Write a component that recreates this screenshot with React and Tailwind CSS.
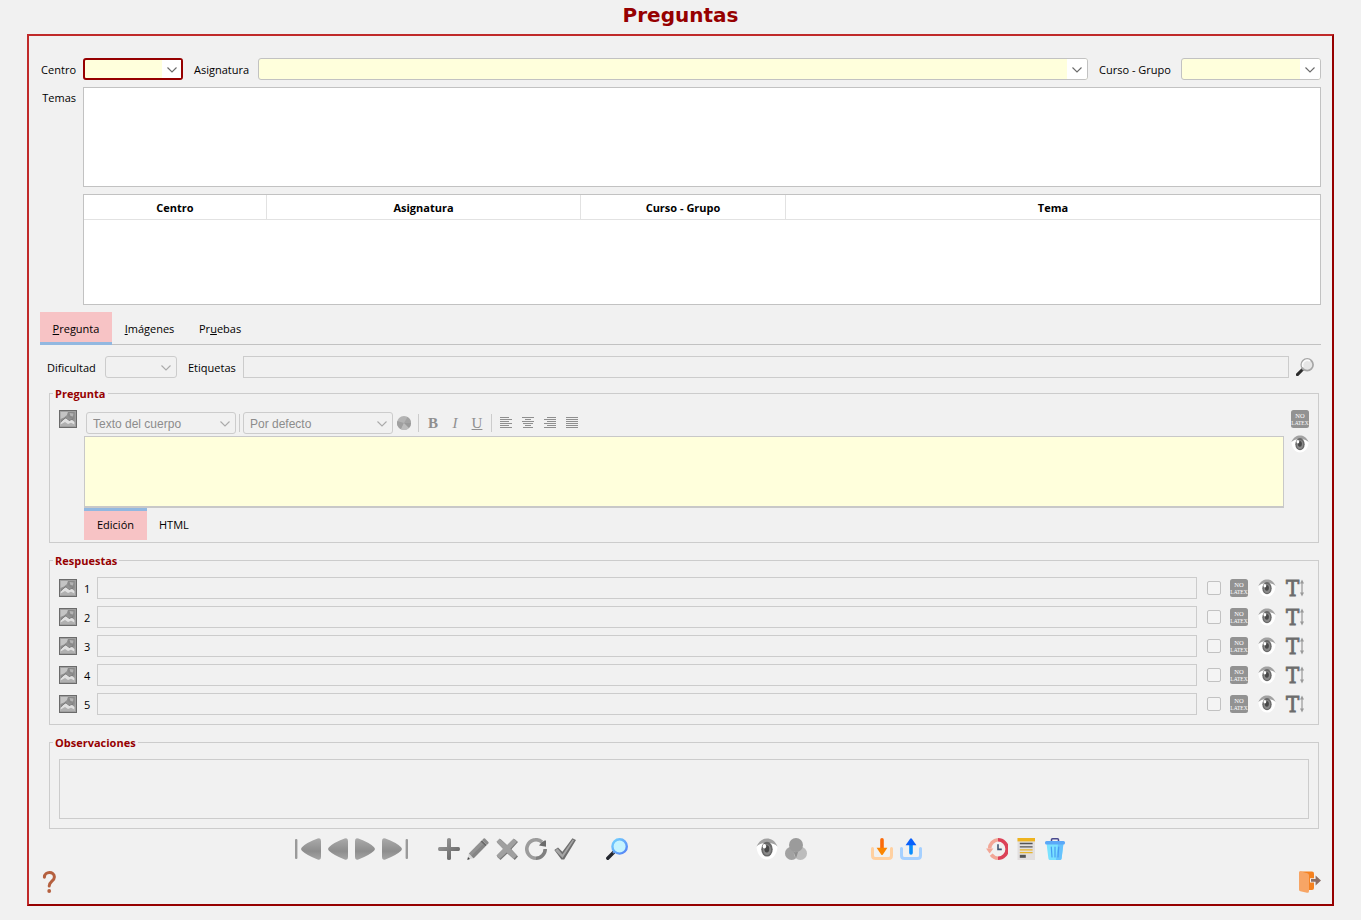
import React from "react";

function Chevron({ className }) {
  return (
    <svg className={className} width="10" height="6" viewBox="0 0 10 6" fill="none" stroke="currentColor" strokeWidth="1.1" aria-hidden="true">
      <path d="M0.5 0.5 L5 5 L9.5 0.5" />
    </svg>
  );
}

function Combo({ id, label, wrapClass, selectClass, arrowClass, chevronClass, disabled, options = [""] }) {
  return (
    <div className={`relative h-[22px] ${wrapClass}`}>
      <select
        id={id}
        aria-label={label}
        disabled={disabled}
        className={`block h-full w-full appearance-none rounded-[3px] outline-none opacity-100 ${selectClass}`}
      >
        {options.map((o) => (
          <option key={o}>{o}</option>
        ))}
      </select>
      <span className={`pointer-events-none absolute flex items-center justify-center pt-px ${arrowClass}`}>
        <Chevron className={chevronClass} />
      </span>
    </div>
  );
}

const ACTIVE = "border border-[#c2c2c2] bg-[#ffffdc]";
const ACTIVE_ARROW = "right-px top-px bottom-px w-5 rounded-r-[2px] bg-white";
const DISABLED = "border border-[#cccccc] bg-[#f1f1f1]";
const DISABLED_ARROW = "right-px top-px bottom-px w-5";
const EDITOR_SELECT = "pl-1.5 pt-0.5 font-['Liberation_Sans',Arial,sans-serif] text-xs text-[#8c8c8c]";

function PictureIcon() {
  return (
    <svg width="18" height="18" viewBox="0 0 18 18" aria-hidden="true">
      <rect width="18" height="18" fill="#6b6b6b" />
      <rect x="1" y="1" width="16" height="16" fill="#a0a0a0" />
      <rect x="1.5" y="2" width="14" height="14" fill="#929292" />
      <path d="M1.5 2 H9 L8 5 L5 7.5 L1.5 9 Z" fill="#c4c4c4" />
      <path d="M9 2 H15.5 V9.5 L11 8 L8.5 5 Z" fill="#8a8a8a" />
      <path d="M10.5 3 L14.5 3.5 L14 6.5 L11.5 6 Z" fill="#b4b4b4" />
      <path d="M1.5 13 L4.5 9.5 L7.5 8 L10 10.5 L12.5 9.5 L15.5 12 V16 H1.5 Z" fill="#e0e0e0" />
      <path d="M1.5 16 V14.5 L6 12 L9 14 L12 12.8 L15.5 14.5 V16 Z" fill="#b0b0b0" />
      <path d="M2 11.5 L6.5 7.8 L8.5 9 L10 10.6 L14 9" fill="none" stroke="#707070" strokeWidth="0.8" />
    </svg>
  );
}

function LatexIcon() {
  return (
    <svg className="overflow-visible" width="18" height="18" viewBox="0 0 18 18" aria-hidden="true">
      <rect width="18" height="18" rx="2.5" fill="#929292" />
      <g fill="#ffffff" fontFamily="Liberation Serif, serif" textAnchor="middle">
        <text x="9" y="7.6" fontSize="6.5">NO</text>
        <text x="9" y="14.6" fontSize="5.5">LATEX</text>
      </g>
    </svg>
  );
}

function EyeIcon({ size = 18 }) {
  return (
    <svg width={size} height={size} viewBox="0 0 22 22" aria-hidden="true">
      <path d="M0.5 9 C4 3 18 3 21.5 9 C21 16 17 21.5 11 21.5 C5 21.5 1 16 0.5 9 Z" fill="#fff" />
      <path d="M0.5 8.5 C3 2.5 7 0.5 11 0.5 C15 0.5 19 2.5 21.5 8.5 C17 3.6 5 3.6 0.5 8.5 Z" fill="#a2a2a2" />
      <ellipse cx="11" cy="11.2" rx="5.7" ry="7.4" fill="#686868" />
      <ellipse cx="11" cy="11.7" rx="4" ry="5.4" fill="#8a8a8a" />
      <ellipse cx="10.8" cy="10.8" rx="2.5" ry="3.6" fill="#484848" />
      <ellipse cx="8.4" cy="8.2" rx="1.7" ry="2.2" fill="#fff" />
    </svg>
  );
}

function TextHeightIcon() {
  return (
    <svg className="overflow-visible" width="18" height="18" viewBox="0 0 18 18" aria-hidden="true">
      <text x="6.6" y="17" textAnchor="middle" fontSize="22" fontFamily="DejaVu Serif Condensed, Liberation Serif, serif" fill="#6c6c6c" stroke="#6c6c6c" strokeWidth="0.8">T</text>
      <path d="M16 3 V15" stroke="#999" strokeWidth="1.2" />
      <path d="M16 0.5 L18 4.5 H14 Z M16 17.5 L18 13.5 H14 Z" fill="#999" />
    </svg>
  );
}

function GreyLensIcon() {
  return (
    <svg width="18" height="18" viewBox="0 0 18 18" aria-hidden="true">
      <path d="M1.4 16.6 L6.5 11.5" stroke="#2c2c2c" strokeWidth="3" strokeLinecap="round" />
      <path d="M6 12 L7.5 10.5" stroke="#777" strokeWidth="1.6" />
      <circle cx="11.2" cy="6.8" r="5.9" fill="#e6e6e6" stroke="#a6a6a6" strokeWidth="1.7" />
      <path d="M7 9 A4.8 4.8 0 0 1 14 3" fill="none" stroke="#fafafa" strokeWidth="1.6" />
    </svg>
  );
}

function BlueLensIcon() {
  return (
    <svg width="22" height="22" viewBox="0 0 22 22" aria-hidden="true">
      <defs>
        <linearGradient id="ring" x1="0" y1="0" x2="1" y2="1">
          <stop offset="0" stopColor="#74d4ff" />
          <stop offset="1" stopColor="#5480f5" />
        </linearGradient>
      </defs>
      <path d="M1.8 20.2 L7.5 14.5" stroke="#24272f" strokeWidth="3.4" strokeLinecap="round" />
      <path d="M7 15 L9 13" stroke="#6d8fc9" strokeWidth="2" />
      <circle cx="13.6" cy="8.4" r="7.2" fill="#c5f4ff" stroke="url(#ring)" strokeWidth="2.4" />
    </svg>
  );
}

function Gradients() {
  return (
    <svg className="absolute" width="0" height="0" aria-hidden="true">
      <defs>
        <linearGradient id="nav" x1="0" y1="0" x2="0" y2="1">
          <stop offset="0" stopColor="#aaaaaa" />
          <stop offset="0.6" stopColor="#8d8d8d" />
          <stop offset="1" stopColor="#a5a5a5" />
        </linearGradient>
        <linearGradient id="steel" x1="0" y1="0" x2="1" y2="1">
          <stop offset="0" stopColor="#a2a2a2" />
          <stop offset="1" stopColor="#5c5c5c" />
        </linearGradient>
      </defs>
    </svg>
  );
}

const LEFT = "M16.6 0.6 Q20 -0.6 20 3 V19 Q20 22.6 16.6 21.4 Q6 17.5 1.2 13 Q-1 11 1.2 9 Q6 4.5 16.6 0.6 Z";

function FirstIcon() {
  return (
    <svg width="26" height="22" viewBox="0 0 26 22" aria-hidden="true">
      <rect x="0" y="1" width="2.4" height="20" rx="1" fill="#9a9a9a" />
      <g transform="translate(6 0)"><path d={LEFT} fill="url(#nav)" /></g>
    </svg>
  );
}
function PrevIcon() {
  return (
    <svg width="20" height="22" viewBox="0 0 20 22" aria-hidden="true"><path d={LEFT} fill="url(#nav)" /></svg>
  );
}
function NextIcon() {
  return (
    <svg width="20" height="22" viewBox="0 0 20 22" aria-hidden="true">
      <g transform="translate(20 0) scale(-1 1)"><path d={LEFT} fill="url(#nav)" /></g>
    </svg>
  );
}
function LastIcon() {
  return (
    <svg width="26" height="22" viewBox="0 0 26 22" aria-hidden="true">
      <g transform="translate(20 0) scale(-1 1)"><path d={LEFT} fill="url(#nav)" /></g>
      <rect x="23.6" y="1" width="2.4" height="20" rx="1" fill="#9a9a9a" />
    </svg>
  );
}

function Icon22({ children }) {
  return (
    <svg width="22" height="22" viewBox="0 0 22 22" fill="none" aria-hidden="true">{children}</svg>
  );
}

const PlusIcon = () => (
  <Icon22>
    <path d="M9 1.5 Q9 0 11 0 Q13 0 13 1.5 V9 H20.5 Q22 9 22 11 Q22 13 20.5 13 H13 V20.5 Q13 22 11 22 Q9 22 9 20.5 V13 H1.5 Q0 13 0 11 Q0 9 1.5 9 H9 Z" fill="url(#steel)" />
  </Icon22>
);
const PencilIcon = () => (
  <Icon22>
    <path d="M1.8 15.4 L6.6 20.2 L0.4 21.8 Z" fill="#d8d8d8" />
    <path d="M1 19 L3 21 L0.3 21.9 Z" fill="#444" />
    <path d="M1.8 15.4 L13.4 3.8 L18.2 8.6 L6.6 20.2 Z" fill="#929292" />
    <path d="M4.4 17.8 L15.8 6.4 L18.2 8.6 L6.6 20.2 Z" fill="#858585" />
    <path d="M13.4 3.8 L15 2.2 L19.8 7 L18.2 8.6 Z" fill="#686868" />
    <path d="M15 2.2 L16.6 0.6 Q17.4 0 18 0.6 L21.4 4 Q22 4.6 21.4 5.4 L19.8 7 Z" fill="#8b8b8b" />
  </Icon22>
);
const CrossIcon = () => (
  <Icon22>
    <path d="M4.5 1 L11.5 7.6 L18.5 1 L22 4 L15.4 11.2 L22 18.5 L18.8 22 L11.4 15.4 L4.5 22 L1 18.8 L7.6 11.2 L1 4.4 Z" fill="#777" />
    <path d="M3.6 0.4 L10.8 7.2 L17.6 0.4 L21 3.8 L14.4 10.8 L21 17.6 L17.6 21 L10.8 14.4 L3.8 21 L0.4 17.6 L7 10.8 L0.4 3.8 Z" fill="#a0a0a0" />
  </Icon22>
);
const RefreshIcon = () => (
  <Icon22>
    <path d="M11 20.2 A9.2 9.2 0 1 1 17 4" stroke="#9c9c9c" strokeWidth="3.6" />
    <path d="M20.2 11 A9.2 9.2 0 0 1 11 20.2" stroke="#808080" strokeWidth="3.6" />
    <path d="M14 7.6 L16.4 4.6 L19.6 2.4 L21 2.4 V8.8 Z" fill="#6c6c6c" />
  </Icon22>
);
const CheckIcon = () => (
  <Icon22>
    <path d="M0.3 12 L4 9.4 L8.4 13.8 L18.4 0.3 L22 2 L10.2 21.6 H7.4 Z" fill="#6f6f6f" />
    <path d="M1.2 12.4 L3.6 10.6 L8.4 16.4 L18.8 1.4 L20 2.2 L8.6 20 Z" fill="#a6a6a6" />
  </Icon22>
);
const BallsIcon = () => (
  <Icon22>
    <circle cx="6.6" cy="15.4" r="6.6" fill="#a2a2a2" />
    <circle cx="15.4" cy="15.4" r="6.6" fill="#bcbcbc" />
    <circle cx="11" cy="7" r="7" fill="#9b9b9b" />
    <path d="M8.8 14 Q11 14.4 13.2 13.6 L11 20.3 Z" fill="#8e8e8e" />
  </Icon22>
);
const DownloadIcon = () => (
  <Icon22>
    <path d="M1.5 10.5 V17.5 Q1.5 20.5 4.5 20.5 H17.5 Q20.5 20.5 20.5 17.5 V10.5" stroke="#ffd0a0" strokeWidth="3" strokeLinecap="round" />
    <path d="M11 1.8 V12" stroke="#fb6a0a" strokeWidth="3.6" strokeLinecap="round" />
    <path d="M5.6 9.8 H16.4 L11.9 16.4 Q11 17.6 10.1 16.4 Z" fill="#fb8500" />
  </Icon22>
);
const UploadIcon = () => (
  <Icon22>
    <path d="M1.5 10.5 V17.5 Q1.5 20.5 4.5 20.5 H17.5 Q20.5 20.5 20.5 17.5 V10.5" stroke="#a5d0ff" strokeWidth="3" strokeLinecap="round" />
    <path d="M11 5 V15" stroke="#0a8dfb" strokeWidth="3.6" strokeLinecap="round" />
    <path d="M5.6 7.2 H16.4 L11.9 0.8 Q11 -0.4 10.1 0.8 Z" fill="#0a60fb" />
  </Icon22>
);
const HistoryIcon = () => (
  <Icon22>
    <path d="M12 1.8 A9.2 9.2 0 0 0 3.6 10.5 M5.2 16.6 A9.2 9.2 0 0 0 12 20.2" stroke="#f2a797" strokeWidth="3.6" />
    <path d="M0 10.4 H7.4 L3.6 15.6 Z" fill="#f2a797" />
    <path d="M12 1.8 A9.2 9.2 0 0 1 12 20.2" stroke="#dc4258" strokeWidth="3.6" />
    <path d="M12 6.2 V11.4 H15.8" stroke="#3f5573" strokeWidth="1.6" />
  </Icon22>
);
const NotesIcon = () => (
  <Icon22>
    <rect x="2.5" y="0" width="17.5" height="22" fill="#e2dfdf" />
    <rect x="2.5" y="0" width="17.5" height="3.4" fill="#eeb31e" />
    <path d="M4.8 5.5 H17.6 M4.8 8.8 H17.6" stroke="#555" strokeWidth="1.3" />
    <path d="M4.8 11.8 H17.6 M4.8 14.6 H17.6" stroke="#e8b52c" strokeWidth="1.3" />
    <rect x="4.8" y="16.8" width="6" height="3" fill="#555" />
  </Icon22>
);
const TrashIcon = () => (
  <Icon22>
    <path d="M7.5 3.5 V1.8 Q7.5 0.8 8.5 0.8 H13.5 Q14.5 0.8 14.5 1.8 V3.5" stroke="#4a4a8f" strokeWidth="1.5" />
    <path d="M2.6 6 H19.4 L17.6 20.4 Q17.4 22 15.8 22 H6.2 Q4.6 22 4.4 20.4 Z" fill="#7ae2ff" />
    <path d="M14 6 H19.4 L17.6 20.4 Q17.4 22 15.8 22 H12 Z" fill="#66c2fd" />
    <rect x="1" y="3" width="20" height="3.6" rx="1.5" fill="#5aa8f8" />
    <path d="M7.3 9 L8 19 M11 9 V19 M14.7 9 L14 19" stroke="#469cf2" strokeWidth="1.2" strokeLinecap="round" />
  </Icon22>
);
const HelpIcon = () => (
  <Icon22>
    <path d="M4.4 6.2 C4.6 0 14.4 0 14.4 6 C14.4 10 9.2 10.4 9.2 15" stroke="#b5603f" strokeWidth="3" strokeLinecap="round" />
    <circle cx="9.2" cy="20" r="1.9" fill="#b5603f" />
  </Icon22>
);
const ExitIcon = () => (
  <Icon22>
    <path d="M1 0.6 H13 Q15 0.6 15 2.6 V17 Q15 19 13 19 H7 Z" fill="#f58220" />
    <path d="M0 1.6 Q0 -0.2 2 0.5 L8.4 2.2 Q10 2.8 10 4.4 V20 Q10 22.2 8 21.8 L1.4 20.2 Q0 19.8 0 18.4 Z" fill="#f7a565" />
    <path d="M11 7.2 H15.6 V3.4 L22 9.4 L15.6 15.4 V11.6 H11 Z" fill="#f1f1f1" />
    <path d="M12 8 H16.6 V4.4 L22 9.4 L16.6 14.4 V10.8 H12 Z" fill="#8d6e63" />
  </Icon22>
);

function ColorIcon() {
  return (
    <svg width="14" height="14" viewBox="0 0 14 14" aria-hidden="true">
      <circle cx="7" cy="7" r="7" fill="#b4b4b4" />
      <path d="M7 7 L0.3 5 A7 7 0 0 0 4 13.3 Z" fill="#a0a0a0" />
      <path d="M7 7 L10.5 0.9 A7 7 0 0 1 14 7 Z" fill="#a4a4a4" />
      <path d="M7 7 L4 13.3 A7 7 0 0 0 12 12 Z" fill="#bdbdbd" />
      <path d="M7 7 L14 7 A7 7 0 0 1 12 12 Z" fill="#9a9a9a" />
    </svg>
  );
}

const ALIGN = {
  left: [[0, 9], [0, 12], [0, 9], [0, 12], [0, 9], [0, 12]],
  center: [[0, 12], [3, 6], [0, 12], [1, 10], [3, 6], [1, 10]],
  right: [[3, 9], [0, 12], [3, 9], [0, 12], [3, 9], [0, 12]],
  full: [[0, 12], [0, 12], [0, 12], [0, 12], [0, 12], [0, 12]],
};

function AlignIcon({ kind }) {
  return (
    <svg width="12" height="12" viewBox="0 0 12 12" fill="#8f8f8f" aria-hidden="true">
      {ALIGN[kind].map(([x, w], i) => (
        <rect key={i} x={x} y={i * 2} width={w} height="1" />
      ))}
    </svg>
  );
}

function IconButton({ label, children, className = "", disabled }) {
  return (
    <button type="button" aria-label={label} disabled={disabled} className={`flex shrink-0 items-center justify-center ${className}`}>
      {children}
    </button>
  );
}

function Group({ title, className, children }) {
  return (
    <fieldset className={`ml-[9px] mr-0.5 min-w-0 border border-[#cccccc] px-[9px] ${className}`}>
      <legend className="-ml-1.5 h-4 px-0.5 font-bold leading-[18px] text-[#960000]">{title}</legend>
      {children}
    </fieldset>
  );
}

function Separator() {
  return (
    <span className="flex w-[7px] justify-center">
      <span className="h-[18px] w-px shrink-0 bg-[#cccccc]" />
    </span>
  );
}

function Answer({ n }) {
  return (
    <div className="flex h-[22px] items-center">
      <IconButton label={`Imagen de la respuesta ${n}`} disabled><PictureIcon /></IconButton>
      <label htmlFor={`respuesta-${n}`} className="ml-[7px] w-[13px] shrink-0 pt-0.5">{n}</label>
      <input id={`respuesta-${n}`} type="text" disabled className="h-full min-w-0 flex-1 border border-[#cccccc] bg-transparent px-1" />
      <input
        type="checkbox"
        disabled
        aria-label={`Respuesta ${n} correcta`}
        className="ml-2.5 size-3.5 shrink-0 appearance-none rounded-[2px] border border-[#c2c2c2] bg-[#f4f4f4]"
      />
      <div className="ml-[9px] mr-[5px] flex gap-2.5">
        <IconButton label="Sin LaTeX" disabled><LatexIcon /></IconButton>
        <IconButton label="Ver respuesta" disabled><EyeIcon /></IconButton>
        <IconButton label="Altura del texto" disabled><TextHeightIcon /></IconButton>
      </div>
    </div>
  );
}

const COLUMNS = [
  ["Centro", "w-[183px]"],
  ["Asignatura", "w-[314px]"],
  ["Curso - Grupo", "w-[205px]"],
  ["Tema", ""],
];

export default function App() {
  return (
    <div className="min-h-screen bg-[#f1f1f1] px-[27px] pb-3.5 font-['Open_Sans','Noto_Sans',sans-serif] text-[11px] leading-4 text-black">
      <Gradients />
      <h1 className="mb-1 h-[30px] text-center font-['DejaVu_Sans',sans-serif] text-xl font-bold leading-[30px] text-[#960000]">
        Preguntas
      </h1>

      <main className="border-2 border-b-[#960000] border-l-[#c02a2a] border-r-[#960000] border-t-[#c02a2a] px-[11px] pb-[11px] pt-[22px]">
        <div className="grid grid-cols-[36px_minmax(0,1fr)] gap-x-[7px] gap-y-[7px]">
          <label htmlFor="centro" className="flex items-center justify-end pt-0.5">Centro</label>
          <div className="flex items-center">
            <Combo
              id="centro"
              wrapClass="w-[100px] shrink-0"
              selectClass="border-2 border-[#960000] bg-[#ffffdc]"
              arrowClass="bottom-0.5 right-0.5 top-0.5 w-[19px] bg-white"
              chevronClass="text-[#6a6a6a]"
            />
            <label htmlFor="asignatura" className="ml-[11px] w-16 shrink-0 pt-0.5">Asignatura</label>
            <Combo id="asignatura" wrapClass="min-w-0 flex-1" selectClass={ACTIVE} arrowClass={ACTIVE_ARROW} chevronClass="text-[#6a6a6a]" />
            <label htmlFor="curso" className="ml-[11px] w-[82px] shrink-0 whitespace-nowrap pt-0.5">Curso - Grupo</label>
            <Combo id="curso" wrapClass="w-[140px] shrink-0" selectClass={ACTIVE} arrowClass={ACTIVE_ARROW} chevronClass="text-[#6a6a6a]" />
          </div>

          <label htmlFor="temas" className="flex justify-end pt-[3px]">Temas</label>
          <textarea id="temas" className="block h-[100px] w-full resize-none border border-[#c2c2c2] bg-white p-1 outline-none" />

          <div className="col-start-2 h-[111px] border border-[#c2c2c2] bg-white">
            <table className="w-full table-fixed border-separate border-spacing-0">
              <thead>
                <tr>
                  {COLUMNS.map(([name, width]) => (
                    <th key={name} scope="col" className={`h-[25px] border-b border-r border-[#e2e2e2] p-0 pt-0.5 text-center font-bold last:border-r-0 ${width}`}>
                      {name}
                    </th>
                  ))}
                </tr>
              </thead>
            </table>
          </div>
        </div>

        <div role="tablist" className="mt-[7px] flex h-[33px] border-b border-[#c2c2c2]">
          <button type="button" role="tab" aria-selected="true" className="h-[33px] min-w-[72px] border-b-[3px] border-[#92b8e0] bg-[#f7c3c5] px-3 pt-1">
            <u>P</u>regunta
          </button>
          <button type="button" role="tab" aria-selected="false" className="h-[30px] min-w-[75px] px-3 pt-1"><u>I</u>mágenes</button>
          <button type="button" role="tab" aria-selected="false" className="h-[30px] px-3 pt-1">Pr<u>u</u>ebas</button>
        </div>

        <div className="mb-[7px] ml-[7px] mr-[7px] mt-[11px] flex items-center">
          <label htmlFor="dificultad" className="w-[58px] shrink-0 pt-0.5">Dificultad</label>
          <Combo id="dificultad" disabled wrapClass="w-[72px] shrink-0" selectClass={DISABLED} arrowClass={DISABLED_ARROW} chevronClass="text-[#aaa]" />
          <label htmlFor="etiquetas" className="ml-[11px] w-[55px] shrink-0 pt-0.5">Etiquetas</label>
          <input id="etiquetas" type="text" disabled className="h-[22px] min-w-0 flex-1 border border-[#cccccc] bg-transparent px-1" />
          <IconButton label="Buscar etiquetas" className="ml-[7px]"><GreyLensIcon /></IconButton>
        </div>

        <Group title="Pregunta" className="pb-0.5">
          <div className="flex pt-[9px]">
            <IconButton label="Imagen de la pregunta" disabled className="self-start"><PictureIcon /></IconButton>
            <div className="ml-[7px] mr-[7px] min-w-0 flex-1 pt-0.5">
              <div className="mb-0.5 ml-0.5 flex h-[22px] items-center">
                <Combo
                  label="Estilo de párrafo"
                  disabled
                  options={["Texto del cuerpo"]}
                  wrapClass="w-[150px] shrink-0"
                  selectClass={`${DISABLED} ${EDITOR_SELECT}`}
                  arrowClass={DISABLED_ARROW}
                  chevronClass="text-[#aaa]"
                />
                <Separator />
                <Combo
                  label="Tipo de letra"
                  disabled
                  options={["Por defecto"]}
                  wrapClass="w-[150px] shrink-0"
                  selectClass={`${DISABLED} ${EDITOR_SELECT}`}
                  arrowClass={DISABLED_ARROW}
                  chevronClass="text-[#aaa]"
                />
                <IconButton label="Color" disabled className="w-[22px]"><ColorIcon /></IconButton>
                <Separator />
                <button type="button" disabled className="h-[22px] w-[22px] font-['Liberation_Serif',serif] text-[15px] font-bold text-[#8f8f8f]">B</button>
                <button type="button" disabled className="h-[22px] w-[22px] font-['Liberation_Serif',serif] text-[15px] italic text-[#8f8f8f]">I</button>
                <button type="button" disabled className="h-[22px] w-[22px] font-['Liberation_Serif',serif] text-[15px] text-[#8f8f8f] underline">U</button>
                <Separator />
                <IconButton label="Alinear a la izquierda" disabled className="w-[22px]"><AlignIcon kind="left" /></IconButton>
                <IconButton label="Centrar" disabled className="w-[22px]"><AlignIcon kind="center" /></IconButton>
                <IconButton label="Alinear a la derecha" disabled className="w-[22px]"><AlignIcon kind="right" /></IconButton>
                <IconButton label="Justificar" disabled className="w-[22px]"><AlignIcon kind="full" /></IconButton>
              </div>
              <textarea aria-label="Texto de la pregunta" className="block h-[72px] w-full resize-none border border-b-2 border-[#c8c8c8] bg-[#ffffdc] p-1 outline-none" />
              <div role="tablist" className="flex h-8">
                <button type="button" role="tab" aria-selected="true" className="min-w-[63px] border-t-[3px] border-[#92b8e0] bg-[#f7c3c5] px-3 pb-0.5">Edición</button>
                <button type="button" role="tab" aria-selected="false" className="border-t-[3px] border-transparent px-3 pb-0.5">HTML</button>
              </div>
            </div>
            <div className="flex flex-col gap-[7px]">
              <IconButton label="Sin LaTeX" disabled><LatexIcon /></IconButton>
              <IconButton label="Ver pregunta" disabled><EyeIcon /></IconButton>
            </div>
          </div>
        </Group>

        <Group title="Respuestas" className="mt-[9px] pb-[9px]">
          <div className="flex flex-col gap-[7px] pt-[9px]">
            {[1, 2, 3, 4, 5].map((n) => (
              <Answer key={n} n={n} />
            ))}
          </div>
        </Group>

        <Group title="Observaciones" className="mt-[9px] pb-[9px]">
          <div className="pt-[9px]">
            <textarea aria-label="Observaciones" disabled className="block h-[60px] w-full resize-none border border-[#cccccc] bg-transparent p-1" />
          </div>
        </Group>

        <div className="mt-[9px] flex h-[22px] items-center justify-center">
          <div className="flex gap-[7px]">
            <IconButton label="Primero" disabled><FirstIcon /></IconButton>
            <IconButton label="Anterior" disabled><PrevIcon /></IconButton>
            <IconButton label="Siguiente" disabled><NextIcon /></IconButton>
            <IconButton label="Último" disabled><LastIcon /></IconButton>
          </div>
          <div className="ml-[30px] flex gap-[7px]">
            <IconButton label="Añadir" disabled><PlusIcon /></IconButton>
            <IconButton label="Editar" disabled><PencilIcon /></IconButton>
            <IconButton label="Borrar" disabled><CrossIcon /></IconButton>
            <IconButton label="Refrescar" disabled><RefreshIcon /></IconButton>
            <IconButton label="Aceptar" disabled><CheckIcon /></IconButton>
          </div>
          <IconButton label="Buscar" className="ml-[30px]"><BlueLensIcon /></IconButton>
          <div className="ml-32 flex gap-[7px]">
            <IconButton label="Vista previa" disabled><EyeIcon size={22} /></IconButton>
            <IconButton label="Colores" disabled><BallsIcon /></IconButton>
          </div>
          <div className="ml-16 flex gap-[7px]">
            <IconButton label="Importar"><DownloadIcon /></IconButton>
            <IconButton label="Exportar"><UploadIcon /></IconButton>
          </div>
          <div className="ml-16 flex gap-[7px]">
            <IconButton label="Historial"><HistoryIcon /></IconButton>
            <IconButton label="Notas"><NotesIcon /></IconButton>
            <IconButton label="Vaciar papelera"><TrashIcon /></IconButton>
          </div>
        </div>

        <div className="mt-[11px] flex items-center justify-between">
          <IconButton label="Ayuda"><HelpIcon /></IconButton>
          <IconButton label="Salir"><ExitIcon /></IconButton>
        </div>
      </main>
    </div>
  );
}
